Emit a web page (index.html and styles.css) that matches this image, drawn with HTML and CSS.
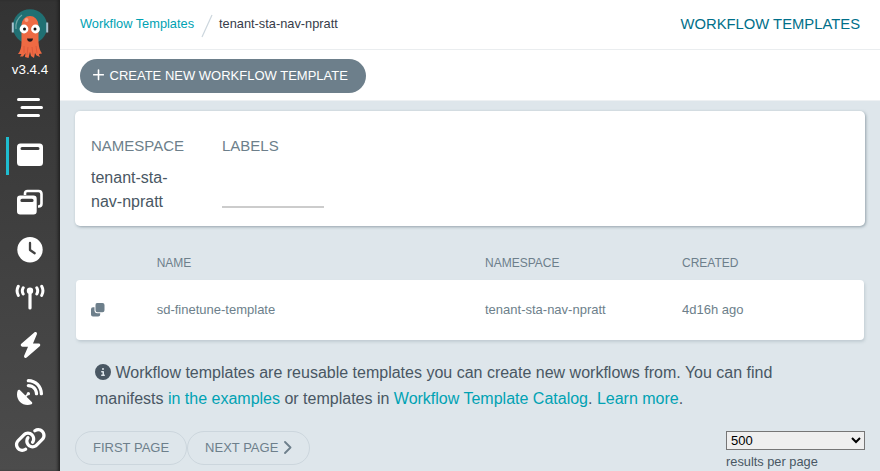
FILE: index.html
```html
<!DOCTYPE html>
<html lang="en">
<head>
<meta charset="utf-8">
<title>Workflow Templates</title>
<link rel="stylesheet" href="styles.css">
</head>
<body>
<div class="layout">
  <nav class="sidebar">
    <div class="logo">
      <svg width="38" height="52" viewBox="0 0 38 52">
        <circle cx="19" cy="18.500" r="17.300" fill="#207073"/>
        <path d="M5 21Q4 12 11 7" fill="none" stroke="#6da5a5" stroke-width="1.200"/>
        <path d="M1.800 14.500v10M36.200 14.500v10" stroke="#a9c3d0" stroke-width="2"/>
        <path d="M10.500 18C10.500 4.700 27.500 4.700 27.500 18L27.500 34Q28 42 31 45.500L28 46Q28 47.500 29 49L25.500 47.500L24 45L23 50L20 48L19 44L17.500 50L14 49L14.500 45L12 48.500L9 48.500L10.500 46L7 46Q10.500 42 10.500 34Z" fill="#ee6a43"/>
        <path d="M13 38v7M17 39l-1 8M21 39l1 8M25 38l1 7" stroke="#d8563a" stroke-width=".8"/>
        <circle cx="15.500" cy="12" r="2" fill="#f6a086"/>
        <circle cx="13" cy="21" r="4.400" fill="#fff"/><circle cx="24.500" cy="21" r="4.400" fill="#fff"/>
        <circle cx="13.500" cy="21" r="1.500" fill="#111"/><circle cx="24" cy="21" r="1.500" fill="#111"/>
        <path d="M16 30.500h6q-.5 3.200-3 3.200t-3-3.200" fill="#26191b"/>
      </svg>
    </div>
    <div class="version">v3.4.4</div>
    <a class="item"><svg width="26" height="26" viewBox="0 0 26 26"><path d="M1.500 5.500h20M5 13.500h19.500M1.500 21.500h20" stroke="#fff" stroke-width="3" stroke-linecap="round"/></svg></a>
    <a class="item active"><svg width="26" height="26" viewBox="0 0 26 26"><path fill="#fff" fill-rule="evenodd" d="M3.500 1.500h19A3.500 3.500 0 0 1 26 5v15.500a3.500 3.500 0 0 1-3.500 3.500h-19A3.500 3.500 0 0 1 0 20.500V5a3.500 3.500 0 0 1 3.500-3.500zM5 5a1.500 1.500 0 0 0 0 3h16a1.500 1.500 0 0 0 0-3z"/></svg></a>
    <a class="item"><svg width="26" height="26" viewBox="0 0 26 26"><path d="M8 6V4.500Q8 2 10.500 2h11Q24.500 2 24.500 5v9.500q0 3-3 3H21" fill="none" stroke="#fff" stroke-width="2.600"/><path fill="#fff" fill-rule="evenodd" d="M3.200 6.500h13.300q3.200 0 3.200 3.200v12.600q0 3.200-3.200 3.200H3.200Q0 25.500 0 22.300V9.700Q0 6.500 3.200 6.500zM5 9.800a1.600 1.600 0 0 0 0 3.200h10a1.600 1.600 0 0 0 0-3.200z"/></svg></a>
    <a class="item"><svg width="26" height="26" viewBox="0 0 26 26"><circle cx="13" cy="12.700" r="12.700" fill="#fff"/><path d="M13 6v7l4.700 3.200" fill="none" stroke="#424242" stroke-width="2.300" stroke-linecap="round" stroke-linejoin="round"/></svg></a>
    <a class="item"><svg width="30" height="26" viewBox="0 0 30 26"><g fill="none" stroke="#fff" stroke-width="3" stroke-linecap="round"><path d="M3.300 2.200Q.800 6.800 3.300 11.400M8.200 3.700q-1.800 3.100 0 6.200M26.700 2.200q2.500 4.600 0 9.200M21.800 3.700q1.800 3.100 0 6.200"/><path d="M15 8v16" stroke-width="3.200"/></g><circle cx="15" cy="6.800" r="3.200" fill="#fff"/></svg></a>
    <a class="item"><svg width="23" height="26" viewBox="0 0 448 512"><path fill="#fff" d="M349.400 44.600c5.900-13.700 1.500-29.700-10.600-38.500s-28.600-8-39.900 1.800l-256 224c-10 8.800-13.600 22.900-8.900 35.300S50.700 288 64 288H175.500L98.600 467.400c-5.900 13.700-1.500 29.700 10.600 38.500s28.600 8 39.900-1.800l256-224c10-8.800 13.600-22.900 8.900-35.300s-16.600-20.700-30-20.700H272.500L349.400 44.600z"/></svg></a>
    <a class="item"><svg width="26" height="26" viewBox="0 0 512 512"><path fill="#fff" d="M192 32c0-17.700 14.300-32 32-32C383.100 0 512 128.900 512 288c0 17.700-14.300 32-32 32s-32-14.300-32-32C448 164.300 347.700 64 224 64c-17.700 0-32-14.300-32-32zM60.600 220.600L164.700 324.700l28.400-28.400c-.7-2.600-1.100-5.400-1.100-8.300c0-17.700 14.300-32 32-32s32 14.300 32 32s-14.300 32-32 32c-2.900 0-5.600-.4-8.300-1.100l-28.400 28.400L291.400 451.400c14.500 14.500 11.800 38.800-7.300 46.300C260.500 506.900 234.900 512 208 512C93.100 512 0 418.900 0 304c0-26.900 5.100-52.500 14.400-76.100c7.500-19 31.800-21.800 46.300-7.300zM224 96c106 0 192 86 192 192c0 17.700-14.300 32-32 32s-32-14.300-32-32c0-70.700-57.300-128-128-128c-17.700 0-32-14.300-32-32s14.300-32 32-32z"/></svg></a>
    <a class="item"><svg width="32.500" height="26" viewBox="0 0 640 512"><path fill="#fff" d="M579.800 267.700c56.500-56.500 56.500-148 0-204.500c-50-50-128.800-56.500-186.300-15.400l-1.600 1.100c-14.400 10.300-17.700 30.300-7.400 44.600s30.300 17.700 44.600 7.400l1.600-1.100c32.100-22.900 76-19.300 103.800 8.600c31.500 31.500 31.500 82.500 0 114L422.300 334.800c-31.500 31.500-82.500 31.500-114 0c-27.900-27.900-31.500-71.800-8.600-103.800l1.100-1.600c10.300-14.400 6.900-34.400-7.400-44.600s-34.400-6.900-44.600 7.400l-1.100 1.600C206.500 251.200 213 330 263 380c56.500 56.500 148 56.500 204.500 0L579.800 267.700zM60.200 244.300c-56.500 56.500-56.500 148 0 204.500c50 50 128.800 56.500 186.300 15.400l1.600-1.100c14.400-10.300 17.700-30.300 7.400-44.600s-30.300-17.700-44.600-7.400l-1.600 1.100c-32.100 22.900-76 19.300-103.800-8.600C74 372 74 321 105.500 289.500L217.700 177.200c31.500-31.500 82.500-31.500 114 0c27.900 27.900 31.500 71.800 8.600 103.900l-1.100 1.600c-10.300 14.400-6.900 34.400 7.400 44.600s34.400 6.900 44.600-7.400l1.100-1.600C433.500 260.800 427 182 377 132c-56.500-56.500-148-56.500-204.500 0L60.200 244.300z"/></svg></a>
  </nav>
  <main class="main">
    <header class="topbar">
      <div class="crumbs">
        <a class="crumb-link">Workflow Templates</a>
        <svg class="slash" width="12" height="24" viewBox="0 0 12 24"><path d="M1 23L11 1" stroke="#ccd6dd" stroke-width="1.200"/></svg>
        <span>tenant-sta-nav-npratt</span>
      </div>
      <div class="title">WORKFLOW TEMPLATES</div>
    </header>
    <div class="toolbar">
      <button class="create"><svg width="11" height="13" viewBox="0 0 11 13"><path d="M5.500 1v9.600M.7 5.800h9.600" stroke="#fff" stroke-width="1.600" stroke-linecap="round"/></svg>CREATE NEW WORKFLOW TEMPLATE</button>
    </div>
    <div class="content">
      <section class="filters">
        <div class="filter"><div class="label">NAMESPACE</div><div class="value">tenant-sta-nav-npratt</div></div>
        <div class="filter"><div class="label">LABELS</div><div class="tags"></div></div>
      </section>
      <div class="row head"><span></span><span>NAME</span><span>NAMESPACE</span><span>CREATED</span></div>
      <div class="row entry">
        <span><svg width="14" height="14" viewBox="0 0 14 14"><path fill="#6d7f8b" d="M6 0h5.500q2 0 2 2v5.200q0 2-2 2H6.500q-2 0-2-2V2q0-2 1.500-2zM2 4.300h1.500v3.500q0 2.400 2.500 2.400h3.200V11.500q0 2-2 2H2q-2 0-2-2V6.300q0-2 2-2z"/></svg></span>
        <span>sd-finetune-template</span><span>tenant-sta-nav-npratt</span><span>4d16h ago</span>
      </div>
      <p class="info"><svg width="16" height="16" viewBox="0 0 512 512"><path fill="#495763" d="M256 512A256 256 0 1 0 256 0a256 256 0 1 0 0 512zM216 336h24V272H216c-13.300 0-24-10.700-24-24s10.700-24 24-24h48c13.300 0 24 10.700 24 24v88h8c13.300 0 24 10.700 24 24s-10.700 24-24 24H216c-13.300 0-24-10.700-24-24s10.700-24 24-24zm40-208a32 32 0 1 1 0 64 32 32 0 1 1 0-64z"/></svg> Workflow templates are reusable templates you can create new workflows from. You can find manifests <a>in the examples</a> or templates in <a>Workflow Template Catalog</a>. <a>Learn more</a>.</p>
      <div class="pager">
        <div class="buttons">
          <button class="page">FIRST PAGE</button><button class="page">NEXT PAGE<svg width="8" height="13" viewBox="0 0 8 13"><path d="M1 1l5.500 5.500L1 12" fill="none" stroke="#6d7f8b" stroke-width="1.800" stroke-linecap="round" stroke-linejoin="round"/></svg></button>
        </div>
        <div class="size"><select><option>500</option></select><div>results per page</div></div>
      </div>
    </div>
  </main>
</div>
</body>
</html>
```
FILE: styles.css
```css
* { box-sizing: border-box; }
body { margin: 0; font-family: "Liberation Sans", sans-serif; font-size: 13px; color: #495763; background: #dee6eb; }
button { font-family: inherit; font-size: 13px; }
.layout { display: flex; height: 471px; overflow: hidden; }
.sidebar { width: 60px; flex: none; background: linear-gradient(#333, #4c4c4c); box-shadow: inset -3px 0 3px -1px #222; }
.logo { display: flex; justify-content: center; padding-top: 8px; height: 60px; }
.version { height: 23.5px; line-height: 19px; font-size: 13.4px; text-align: center; color: #fff; }
.item { display: flex; align-items: center; justify-content: center; height: 47.5px; }
.item svg { flex: none; }
.active { background: linear-gradient(#1fbdd0, #1fbdd0) 6px 6px / 3px 38px no-repeat; }
.main { flex: 1; min-width: 0; }
.topbar { display: flex; justify-content: space-between; align-items: center; height: 50px; padding: 0 20px; background: #fff; border-bottom: 1px solid #eaedef; }
.crumbs { display: flex; align-items: center; font-size: 12.8px; color: #363c4a; height: 48px; padding-bottom: 2px; }
.crumb-link { color: #00a2b3; }
.slash { margin: 4px 6.5px 0 6.5px; }
.title { font-size: 14.8px; color: #006f8a; padding-bottom: 2px; }
.toolbar { height: 51px; background: #fff; border-bottom: 1px solid #eef1f3; padding: 9px 20px; }
.create { display: flex; align-items: center; width: 286px; height: 34px; gap: 5.5px; padding: 0 0 1px 13px; border: 0; border-radius: 17px; background: #6d7f8b; color: #fff; white-space: nowrap; }
.content { padding: 10px 15px 0; }
.filters { display: flex; gap: 29px; height: 115px; padding: 26px 16px 0; background: #fff; border-radius: 5px; box-shadow: 1px 1px 3px rgba(109, 127, 139, .65); }
.filter { width: 102px; }
.label { font-size: 15px; line-height: 18px; color: #6d7f8b; }
.value { font-size: 16px; line-height: 24px; margin-top: 11px; width: 90px; }
.tags { height: 53px; border-bottom: 2px solid #ccc; }
.row { display: grid; grid-template-columns: 65.7px 328.3px 197px 1fr; align-items: center; margin: 0 1px; padding-left: 15px; color: #6d7f8b; }
.head { height: 54px; font-size: 12px; padding-top: 20px; }
.entry { height: 60px; padding-bottom: 2px; background: #fff; border-radius: 4px; box-shadow: 1px 2px 3px rgba(109, 127, 139, .25); }
.entry svg { display: block; margin-top: 1px; }
.info { margin: 20px 20px 0; font-size: 16px; line-height: 26px; }
.info svg { vertical-align: -2px; }
.info a { color: #00a2b3; }
.pager { display: flex; justify-content: space-between; margin-top: 19px; }
.buttons { display: flex; }
.page { display: flex; align-items: center; gap: 6px; height: 34px; padding: 0 17px 2px; border: 1px solid #ccd6dd; border-radius: 17px; background: none; color: #6d7f8b; }
.size { width: 139px; font-size: 12.8px; line-height: 24px; }
.size select { display: block; width: 139px; height: 19px; font-family: inherit; font-size: 13px; border: 1px solid #767676; border-radius: 0; background: #efefef; color: #000; }
```
